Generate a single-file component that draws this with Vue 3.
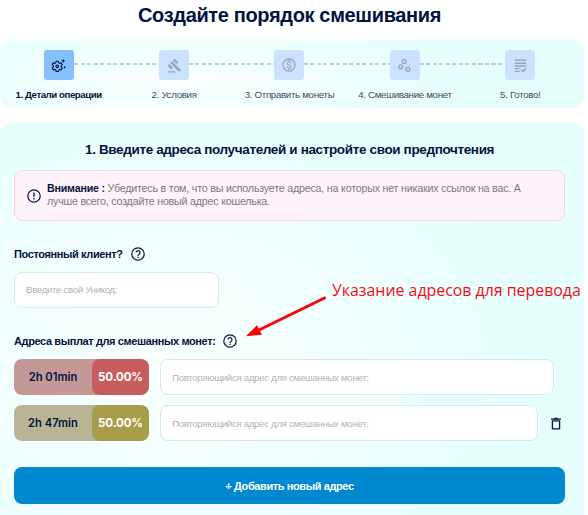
<script setup>
const steps = [
  { icon: 'gear', label: '1. Детали операции', active: true },
  { icon: 'gavel', label: '2. Условия' },
  { icon: 'coin', label: '3. Отправить монеты' },
  { icon: 'mix', label: '4. Смешивание монет' },
  { icon: 'done', label: '5. Готово!' },
]
const payouts = [
  { delay: '2h 01min', share: '50.00%', tone: 'red', removable: false },
  { delay: '2h 47min', share: '50.00%', tone: 'olive', removable: true },
]
</script>

<template>
  <main class="page">
    <h1>Создайте порядок смешивания</h1>

    <ol class="stepper">
      <li v-for="s in steps" :key="s.icon" class="step" :class="{ active: s.active }">
        <span class="tile">
          <svg v-if="s.icon === 'gear'" viewBox="0 0 24 24" class="glyph">
            <g fill="none" stroke="currentColor" stroke-width="1.800">
              <path d="M8.3 5.2h3.4l.6 2.3 1.7 1 2.3-.7 1.7 2.9-1.7 1.7v2l1.7 1.7-1.7 2.9-2.3-.7-1.7 1-.6 2.3H8.300l-.6-2.300-1.700-1-2.300.7L2 16.100l1.700-1.700v-2L2 10.700l1.700-2.900 2.300.7 1.700-1z" stroke-linejoin="round" />
              <circle cx="10" cy="13.400" r="2" />
            </g>
            <path d="M19.500 1l1.100 2.400L23 4.500l-2.400 1.100-1.100 2.400-1.100-2.400L16 4.500l2.400-1.100zM21.800 12.300l.8 1.600 1.600.8-1.600.8-.8 1.600-.8-1.600-1.600-.8 1.600-.8z" fill="currentColor" />
          </svg>
          <svg v-else-if="s.icon === 'gavel'" viewBox="0 0 24 24" class="glyph">
            <path d="M1 21h12v2H1zM5.245 8.070l2.830-2.827 14.140 14.142-2.828 2.828zM12.317 1l5.657 5.656-2.830 2.830-5.654-5.660zM3.825 9.485l5.657 5.657-2.828 2.828-5.657-5.657z" fill="currentColor" />
          </svg>
          <svg v-else-if="s.icon === 'coin'" viewBox="0 0 24 24" class="glyph coin">
            <path d="M12 2C6.480 2 2 6.480 2 12s4.480 10 10 10 10-4.480 10-10S17.520 2 12 2zm0 18c-4.410 0-8-3.590-8-8s3.590-8 8-8 8 3.590 8 8-3.590 8-8 8zm.31-8.860c-1.770-.45-2.340-.94-2.340-1.670 0-.84.79-1.430 2.100-1.430 1.380 0 1.900.66 1.940 1.640h1.710c-.05-1.340-.87-2.570-2.490-2.970V5H10.900v1.690c-1.510.32-2.720 1.300-2.720 2.810 0 1.790 1.490 2.690 3.660 3.210 1.950.46 2.340 1.150 2.340 1.870 0 .53-.39 1.390-2.100 1.390-1.600 0-2.230-.72-2.320-1.640H8.040c.1 1.700 1.360 2.660 2.860 2.970V19h2.340v-1.670c1.520-.29 2.720-1.160 2.730-2.770-.01-2.200-1.900-2.960-3.660-3.420z" fill="currentColor" />
          </svg>
          <svg v-else-if="s.icon === 'mix'" viewBox="0 0 24 24" class="glyph">
            <g fill="none" stroke="currentColor" stroke-width="2.200">
              <circle cx="11.500" cy="5.500" r="3.100" />
              <circle cx="6" cy="14" r="3.100" />
              <circle cx="17.500" cy="18" r="3.100" />
            </g>
          </svg>
          <svg v-else viewBox="0 0 24 24" class="glyph">
            <path d="M3 2.500h18v2.400H3zM3 7h18v2.400H3zM3 11.500h18v2.400H3zM3 16h7.500v2H3zM3 20.300h7.500v2H3z" fill="currentColor" />
            <path d="M13 18.800l2.800 2.800 5.200-5.200" fill="none" stroke="currentColor" stroke-width="2" />
          </svg>
        </span>
        <span class="step-label">{{ s.label }}</span>
      </li>
    </ol>

    <section class="panel">
      <h2>1. Введите адреса получателей и настройте свои предпочтения</h2>

      <div class="alert">
        <svg viewBox="0 0 14 14" class="round-icon">
          <circle cx="7" cy="7" r="6.200" fill="none" stroke="currentColor" stroke-width="1.200" />
          <path d="M7 3.500v4.300M7 9.100v1.400" stroke="currentColor" stroke-width="1.300" />
        </svg>
        <p>
          <span class="line"><b>Внимание :</b> Убедитесь в том, что вы используете адреса, на которых нет никаких ссылок на вас. А</span>
          <span class="line">лучше всего, создайте новый адрес кошелька.</span>
        </p>
      </div>

      <div class="field-title client">
        <span>Постоянный клиент?</span>
        <svg viewBox="0 0 14 14" class="round-icon">
          <circle cx="7" cy="7" r="6.200" fill="none" stroke="currentColor" stroke-width="1.200" />
          <path d="M5 5.600a2 2 0 1 1 3.200 1.600C7.400 7.800 7 8 7 8.900M7 9.700v1.300" fill="none" stroke="currentColor" stroke-width="1.200" />
        </svg>
      </div>
      <input class="input unicode" placeholder="Введите свой Уникод:" />

      <div class="field-title payouts-title">
        <span>Адреса выплат для смешанных монет:</span>
        <svg viewBox="0 0 14 14" class="round-icon">
          <circle cx="7" cy="7" r="6.200" fill="none" stroke="currentColor" stroke-width="1.200" />
          <path d="M5 5.600a2 2 0 1 1 3.200 1.600C7.400 7.800 7 8 7 8.900M7 9.700v1.300" fill="none" stroke="currentColor" stroke-width="1.200" />
        </svg>
      </div>

      <div class="payouts">
        <div v-for="p in payouts" :key="p.delay" class="payout" :class="{ removable: p.removable }">
          <div class="pill" :class="p.tone">
            <span class="delay">{{ p.delay }}</span>
            <span class="share">{{ p.share }}</span>
          </div>
          <input class="input address" placeholder="Повторяющийся адрес для смешанных монет:" />
          <svg v-if="p.removable" viewBox="0 0 10 13" class="trash">
            <path d="M0 1.500h3L3.600.7h2.800l.6.800h3v1.200H0z" fill="currentColor" />
            <path d="M1.400 3.800h7.200v8H1.400z" fill="none" stroke="currentColor" stroke-width="1.300" stroke-linejoin="round" />
          </svg>
        </div>
      </div>

      <button class="add"><span>+ Добавить новый адрес</span></button>
    </section>

    <div class="note">Указание адресов для перевода</div>
    <svg class="arrow" viewBox="0 0 84 44">
      <path d="M79.500 4L14 36" stroke="#fb0007" stroke-width="3" stroke-linecap="round" />
      <path d="M1 42.200L12 31.200L17 40.800z" fill="#fb0007" />
    </svg>
  </main>
</template>

<style>
body {
  margin: 0;
  background: #fff;
  overflow: hidden;
}
</style>

<style scoped>
.page {
  position: relative;
  box-sizing: border-box;
  width: 588px;
  height: 515px;
  padding-right: 4px;
  overflow: hidden;
  display: flex;
  flex-direction: column;
  font-family: "Liberation Sans", Arial, sans-serif;
  color: #03133f;
  white-space: nowrap;
}
h1 {
  margin: 0;
  height: 40px;
  padding-left: 138px;
  font-size: 20px;
  line-height: 30px;
  font-weight: 700;
  letter-spacing: -.35px;
}
.stepper {
  box-sizing: border-box;
  flex: none;
  height: 68px;
  margin: 0 0 14px;
  padding: 10px 6px 0 1px;
  list-style: none;
  display: grid;
  grid-template-columns: repeat(5, 1fr);
  border-radius: 12px;
  background: radial-gradient(ellipse 48% 105% at 32% 60%, #fafffe 0%, #e6fffd 100%);
}
.step {
  position: relative;
  display: flex;
  flex-direction: column;
  align-items: center;
}
.step:not(:last-child)::after {
  content: "";
  position: absolute;
  top: 13px;
  left: calc(50% + 15px);
  width: calc(100% - 30px);
  height: 2px;
  background: repeating-linear-gradient(90deg, #a4d9e9 0 4px, transparent 4px 6.500px);
}
.tile {
  width: 30px;
  height: 30px;
  border-radius: 3px;
  background: #cbe2ff;
  color: #99a5b8;
  display: flex;
  align-items: center;
  justify-content: center;
}
.glyph {
  width: 15px;
  height: 15px;
}
.coin {
  width: 16px;
  height: 16px;
}
.active .tile {
  background: #84bfff;
  color: #07163c;
}
.step-label {
  margin-top: 9px;
  font-size: 9.700px;
  line-height: 12px;
  letter-spacing: -.3px;
  color: #3d4c59;
}
.active .step-label {
  font-weight: 700;
  letter-spacing: -.45px;
  color: #06163a;
}
.panel {
  flex: 1;
  padding: 0 19px 0 14px;
  border-radius: 12px 12px 0 0;
  background: radial-gradient(ellipse 62% 66% at 30% 62%, #f9fffe 0%, #f0fffe 55%, #e6fffd 100%);
}
h2 {
  margin: 0;
  height: 48px;
  padding: 0 0 0 71px;
  box-sizing: border-box;
  font-size: 13.500px;
  line-height: 55px;
  letter-spacing: -.36px;
}
.alert {
  box-sizing: border-box;
  height: 51px;
  padding-left: 12px;
  border: 1.500px solid #fccfd7;
  border-radius: 9px;
  background: #fff3fb;
  display: flex;
  align-items: center;
  gap: 6px;
}
.round-icon {
  width: 14px;
  height: 14px;
  flex: none;
}
.alert p {
  margin: 0 0 1px;
  font-size: 10.700px;
  line-height: 13px;
  letter-spacing: -.21px;
  color: #7d7880;
}
.alert b {
  color: #06163a;
}
.line {
  display: block;
}
.field-title {
  display: flex;
  align-items: center;
  gap: 8px;
  height: 14px;
  font-size: 11px;
  font-weight: 700;
  letter-spacing: -.39px;
}
.client {
  margin: 26px 0 11px;
}
.payouts-title {
  margin: 26px 0 11px;
}
.input {
  box-sizing: border-box;
  display: block;
  height: 36px;
  margin: 0;
  padding: 0 11px 1px;
  border: 1px solid #cdebf0;
  border-radius: 8px;
  background: #fff;
  font: 9.700px "Liberation Sans", Arial, sans-serif;
  letter-spacing: -.33px;
  outline: 0;
}
.input::placeholder {
  color: #b3b3b6;
  opacity: 1;
}
.unicode {
  width: 205px;
}
.payouts {
  display: grid;
  gap: 10px;
}
.payout {
  display: flex;
  align-items: center;
  height: 36px;
  padding-right: 11px;
}
.payout.removable {
  padding-right: 4px;
}
.pill {
  width: 135px;
  height: 36px;
  margin-right: 11px;
  flex: none;
  border-radius: 8px;
  overflow: hidden;
  display: flex;
  font: 600 11.200px/36px Inter, sans-serif;
}
.delay {
  width: 78px;
  text-align: center;
}
.share {
  width: 57px;
  border-radius: 8px;
  color: #fff;
  font-size: 11.500px;
  font-weight: 700;
  letter-spacing: -.1px;
  text-align: center;
}
.red { background: #c59898; }
.red .share { background: #c75c5d; }
.olive { background: #b9b495; }
.olive .share { background: #a89d4b; }
.address {
  flex: 1;
  min-width: 0;
  padding: 1px 11px 0;
}
.trash {
  width: 10px;
  height: 13px;
  margin-left: 13px;
}
.add {
  box-sizing: border-box;
  display: block;
  width: 100%;
  height: 37px;
  margin: 26px 0 0;
  padding: 0;
  border: 0;
  border-radius: 8px;
  background: #0089cf;
  color: #fff;
  font: 700 11px "Liberation Sans", Arial, sans-serif;
  letter-spacing: -.4px;
}
.note {
  position: absolute;
  left: 332px;
  top: 279px;
  font: 15.900px/22px "Open Sans", sans-serif;
  color: #f50d16;
}
.arrow {
  position: absolute;
  left: 245px;
  top: 294px;
  width: 84px;
  height: 44px;
}
</style>
